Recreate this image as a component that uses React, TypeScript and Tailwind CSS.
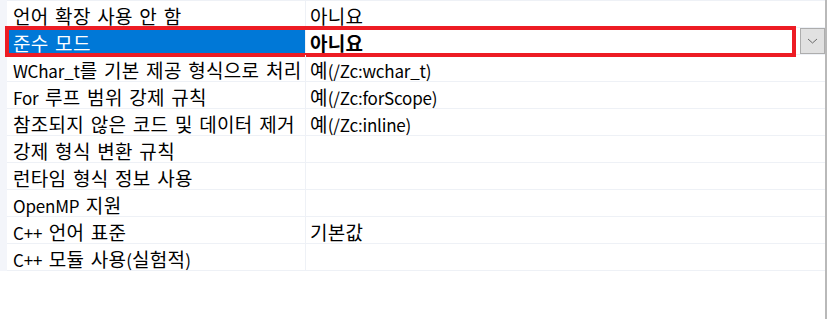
import React from "react";

const rows: { name: string; value: string }[] = [
  { name: "언어 확장 사용 안 함", value: "아니요" },
  { name: "준수 모드", value: "아니요" },
  { name: "WChar_t를 기본 제공 형식으로 처리", value: "예(/Zc:wchar_t)" },
  { name: "For 루프 범위 강제 규칙", value: "예(/Zc:forScope)" },
  { name: "참조되지 않은 코드 및 데이터 제거", value: "예(/Zc:inline)" },
  { name: "강제 형식 변환 규칙", value: "" },
  { name: "런타임 형식 정보 사용", value: "" },
  { name: "OpenMP 지원", value: "" },
  { name: "C++ 언어 표준", value: "기본값" },
  { name: "C++ 모듈 사용(실험적)", value: "" },
];

function Mixed({ text }: { text: string }) {
  const parts = text.split(/([A-Za-z0-9_/:().+]+)/);
  return (
    <>
      {parts.map((p, i) =>
        /^[A-Za-z0-9_/:().+]+$/.test(p) ? (
          <span key={i} className="text-[17px] tracking-[-0.2px]">
            {p}
          </span>
        ) : (
          <React.Fragment key={i}>{p}</React.Fragment>
        )
      )}
    </>
  );
}

export default function App() {
  return (
    <div
      className="relative w-[827px] h-[319px] bg-white flex text-[19px] leading-none text-black overflow-hidden tracking-[0.3px] [word-spacing:2px]"
      style={{ fontFamily: '"Noto Sans CJK KR", sans-serif' }}
    >
      <div className="w-[825px] flex flex-col">
        <div className="flex">
          <div className="w-[7px] bg-[#f3f5fa]" />
          <div className="flex-1 flex flex-col border-t border-[#eef1f6]">
            {rows.map((r, i) => {
              const sel = i === 1;
              return (
                <div key={i} className="relative h-[27px] flex border-b border-[#eef1f6]">
                  <div
                    className={
                      "w-[299px] border-r border-[#eef1f6] pl-[6px] pt-[2px] flex items-center whitespace-nowrap " +
                      (sel ? "bg-[#0078d7] text-white" : "")
                    }
                  >
                    <div>
                      <Mixed text={r.name} />
                    </div>
                  </div>
                  <div
                    className={
                      "flex-1 pl-[4px] pt-[2px] flex items-center whitespace-nowrap " +
                      (sel ? "font-bold" : "")
                    }
                  >
                    <div>
                      <Mixed text={r.value} />
                    </div>
                  </div>
                  {sel && (
                    <>
                      <div className="w-[25px] h-[26px] bg-[#e1e1e1] border border-[#adadad] flex items-center justify-center">
                        <svg width="11" height="6" viewBox="0 0 11 6">
                          <path d="M1 1 L5.5 5 L10 1" fill="none" stroke="#6a6a6a" strokeWidth="1" />
                        </svg>
                      </div>
                      <div className="absolute left-[-2px] top-[-2px] w-[791px] h-[31px] border-4 border-[#ed1c24] pointer-events-none" />
                    </>
                  )}
                </div>
              );
            })}
          </div>
        </div>
      </div>
      <div className="w-[2px] bg-[#b9b9b9]" />
    </div>
  );
}
